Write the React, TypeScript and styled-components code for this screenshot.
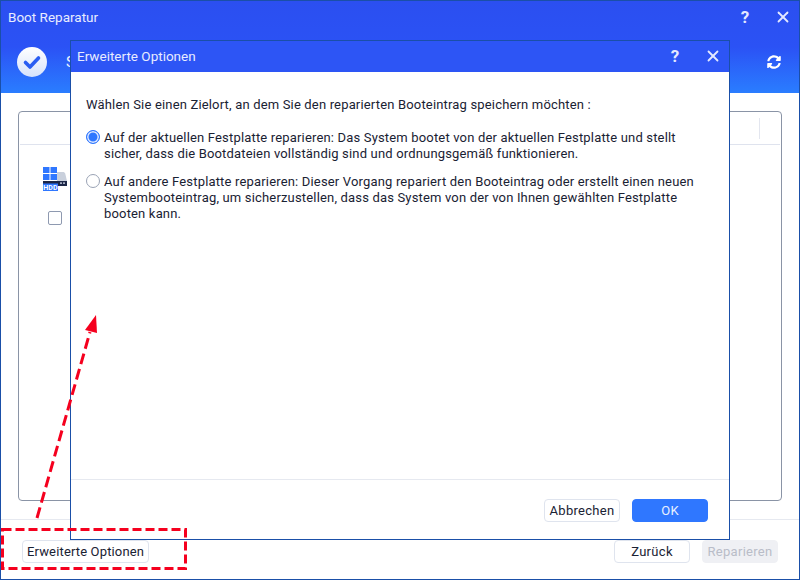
import styled, { createGlobalStyle } from 'styled-components';
import { X } from 'lucide-react';
import { FaSyncAlt } from 'react-icons/fa';

const Global = createGlobalStyle`
  html, body {
    margin: 0;
    padding: 0;
    background: #fff;
  }
  * {
    box-sizing: border-box;
  }
`;

const Window = styled.div`
  position: relative;
  width: 800px;
  height: 580px;
  display: flex;
  flex-direction: column;
  border: 1px solid #1a4fa8;
  overflow: hidden;
  font-family: Roboto, "Liberation Sans", sans-serif;
  font-size: 13px;
  letter-spacing: 0.17px;
  color: #1a2233;
`;
const Banner = styled.div`
  height: 92px;
  flex: none;
  background: linear-gradient(180deg, #2b4ff0 0%, #2b52f5 50%, #2a7dff 100%);
  color: #fff;
`;
const TitleBar = styled.div`
  height: 32px;
  display: flex;
  align-items: center;
  padding: 0 0 0 7px;
`;
const Title = styled.div`
  flex: 1;
  font-size: 13.5px;
  letter-spacing: 0;
  color: #e8ecff;
`;
const TitleButton = styled.button`
  width: 32px;
  height: 24px;
  padding: 0;
  margin-left: ${(p: { $gap?: number }) => p.$gap ?? 0}px;
  display: flex;
  align-items: center;
  justify-content: center;
  background: none;
  border: none;
  color: #e4e9ff;
  font-family: inherit;
  font-size: 17px;
  font-weight: 700;
`;
const Status = styled.div`
  display: flex;
  align-items: center;
  gap: 19px;
  padding: 14px 18px 0 16px;
`;
const StatusText = styled.div`
  flex: 1;
  font-size: 15px;
  color: #eef2ff;
`;
const Body = styled.div`
  flex: 1;
  padding: 18px 17px 18px 17px;
  display: flex;
`;
const Card = styled.div`
  flex: 1;
  border: 1px solid #8a94a6;
  border-radius: 4px;
`;
const CardHead = styled.div`
  height: 33px;
  margin: 0 1px;
  border-bottom: 1px solid #dfe3ee;
  display: flex;
  justify-content: flex-end;
  padding: 6px 20px 0 0;
`;
const HeadDivider = styled.div`
  width: 1px;
  height: 21px;
  background: #e3e6ef;
`;
const DiskCell = styled.div`
  display: flex;
  flex-direction: column;
  align-items: flex-start;
  gap: 20px;
  padding: 22px 0 0 24px;
`;
const CheckBox = styled.div`
  width: 14px;
  height: 14px;
  margin-left: 5px;
  border: 1px solid #8e99b0;
  border-radius: 2px;
  background: #fff;
`;
const Footer = styled.div`
  height: 60px;
  flex: none;
  border-top: 1px solid #e6e9f0;
  display: flex;
  align-items: flex-start;
  padding: 20px 21px 0 21px;
  gap: 12px;
`;
const Spacer = styled.div`
  flex: 1;
`;
const Button = styled.button`
  height: 23px;
  width: ${(p: { $w?: number }) => (p.$w ? `${p.$w}px` : 'auto')};
  padding: 0 4px;
  background: #fff;
  border: 1px solid #dfe4ee;
  border-radius: 4px;
  font-family: inherit;
  font-size: 13px;
  letter-spacing: 0.3px;
  color: #1a2233;
  white-space: nowrap;
`;
const OptionsButton = styled(Button)`
  letter-spacing: 0.15px;
`;
const PrimaryButton = styled(Button)`
  background: #2f77ff;
  border-color: #2f77ff;
  color: #e8f0ff;
`;
const DisabledButton = styled(Button)`
  background: #eff0f4;
  border-color: #eff0f4;
  color: #b9bdc8;
`;

const Dialog = styled.div`
  position: absolute;
  left: 69px;
  top: 39px;
  width: 660px;
  height: 500px;
  display: flex;
  flex-direction: column;
  background: #fff;
  border: 1px solid #1a4fa8;
`;
const DialogHead = styled.div`
  height: 31px;
  flex: none;
  display: flex;
  align-items: center;
  padding: 0 0 1px 6px;
  background: #2d55f5;
  color: #fff;
`;
const DialogContent = styled.div`
  flex: 1;
  padding: 24px 15px 0 15px;
`;
const Prompt = styled.div`
  line-height: 18px;
  margin-bottom: 16px;
`;
const Option = styled.label`
  display: flex;
  gap: 4px;
  line-height: 16px;
  margin-bottom: 12px;
`;
const Radio = styled.span<{ $on?: boolean }>`
  flex: none;
  width: 14px;
  height: 14px;
  border-radius: 50%;
  background: ${(p) => (p.$on ? '#2f77ff' : '#fff')};
  border: ${(p) => (p.$on ? '1px solid #2f77ff' : '1px solid #9aa3b5')};
  box-shadow: ${(p) => (p.$on ? 'inset 0 0 0 1.5px #e4ecff' : 'none')};
`;
const DialogFoot = styled.div`
  height: 60px;
  flex: none;
  border-top: 1px solid #e6e9f0;
  display: flex;
  justify-content: flex-end;
  gap: 12px;
  padding: 19px 21px 0 0;
`;
const Annotation = styled.svg`
  position: absolute;
  left: -1px;
  top: -1px;
  pointer-events: none;
`;

const HddIcon = () => (
  <svg width="25" height="24" viewBox="0 0 25 24">
    <path d="M14 5h6c1 0 1.700 .5 2.200 1.500L24 14H14z" fill="#c9d0dc" />
    <rect x="0" y="0" width="6.500" height="6" fill="#2f77ff" />
    <rect x="7.500" y="0" width="6.500" height="6" fill="#2f77ff" />
    <rect x="0" y="7" width="6.500" height="6" fill="#2f77ff" />
    <rect x="7.500" y="7" width="6.500" height="6" fill="#2f77ff" />
    <rect x="0" y="14" width="24" height="5" fill="#1c2747" />
    <rect x="0" y="16.500" width="15" height="7.500" fill="#2f77ff" />
    <rect x="17" y="15.500" width="2" height="1.200" fill="#dfe6f5" />
    <rect x="20" y="15.500" width="2" height="1.200" fill="#dfe6f5" />
    <text x="7.500" y="23" textAnchor="middle" fontFamily="Roboto, sans-serif" fontWeight="700" fontSize="7" fill="#fff">
      HDD
    </text>
  </svg>
);

const CheckBadge = () => (
  <svg width="30" height="30" viewBox="0 0 30 30">
    <defs>
      <linearGradient id="badge" x1="0" y1="0" x2="0" y2="1">
        <stop offset="0" stopColor="#ffffff" />
        <stop offset="1" stopColor="#d6e2fb" />
      </linearGradient>
    </defs>
    <circle cx="15" cy="15" r="15" fill="url(#badge)" />
    <path d="M8.500 15.500l4.500 4.500 8.500-9" fill="none" stroke="#2a5df2" strokeWidth="3.600" strokeLinecap="round" strokeLinejoin="round" />
  </svg>
);

const App = () => (
  <Window>
    <Global />
    <Banner>
      <TitleBar>
        <Title>Boot Reparatur</Title>
        <TitleButton>?</TitleButton>
        <TitleButton $gap={6}>
          <X size={18} strokeWidth={2.4} />
        </TitleButton>
      </TitleBar>
      <Status>
        <CheckBadge />
        <StatusText>S</StatusText>
        <FaSyncAlt size={14} color="#fff" />
      </Status>
    </Banner>
    <Body>
      <Card>
        <CardHead>
          <HeadDivider />
        </CardHead>
        <DiskCell>
          <HddIcon />
          <CheckBox />
        </DiskCell>
      </Card>
    </Body>
    <Footer>
      <OptionsButton $w={127}>Erweiterte Optionen</OptionsButton>
      <Spacer />
      <Button $w={76}>Zurück</Button>
      <DisabledButton $w={76}>Reparieren</DisabledButton>
    </Footer>

    <Dialog>
      <DialogHead>
        <Title>Erweiterte Optionen</Title>
        <TitleButton>?</TitleButton>
        <TitleButton $gap={6}>
          <X size={18} strokeWidth={2.4} />
        </TitleButton>
      </DialogHead>
      <DialogContent>
        <Prompt>Wählen Sie einen Zielort, an dem Sie den reparierten Booteintrag speichern möchten :</Prompt>
        <Option>
          <Radio $on />
          <span>
            Auf der aktuellen Festplatte reparieren: Das System bootet von der aktuellen Festplatte und stellt
            <br />
            sicher, dass die Bootdateien vollständig sind und ordnungsgemäß funktionieren.
          </span>
        </Option>
        <Option>
          <Radio />
          <span>
            Auf andere Festplatte reparieren: Dieser Vorgang repariert den Booteintrag oder erstellt einen neuen
            <br />
            Systembooteintrag, um sicherzustellen, dass das System von der von Ihnen gewählten Festplatte
            <br />
            booten kann.
          </span>
        </Option>
      </DialogContent>
      <DialogFoot>
        <Button $w={76}>Abbrechen</Button>
        <PrimaryButton $w={76}>OK</PrimaryButton>
      </DialogFoot>
    </Dialog>

    <Annotation width="800" height="580" viewBox="0 0 800 580">
      <rect x="2.500" y="529.500" width="183" height="39" fill="none" stroke="#f5001e" strokeWidth="3" strokeDasharray="9 4" />
      <line x1="37" y1="518" x2="90" y2="332" stroke="#f5001e" strokeWidth="3" strokeDasharray="11 5" />
      <path d="M96 315L85 330 97 333z" fill="#f5001e" />
    </Annotation>
  </Window>
);

export default App;
